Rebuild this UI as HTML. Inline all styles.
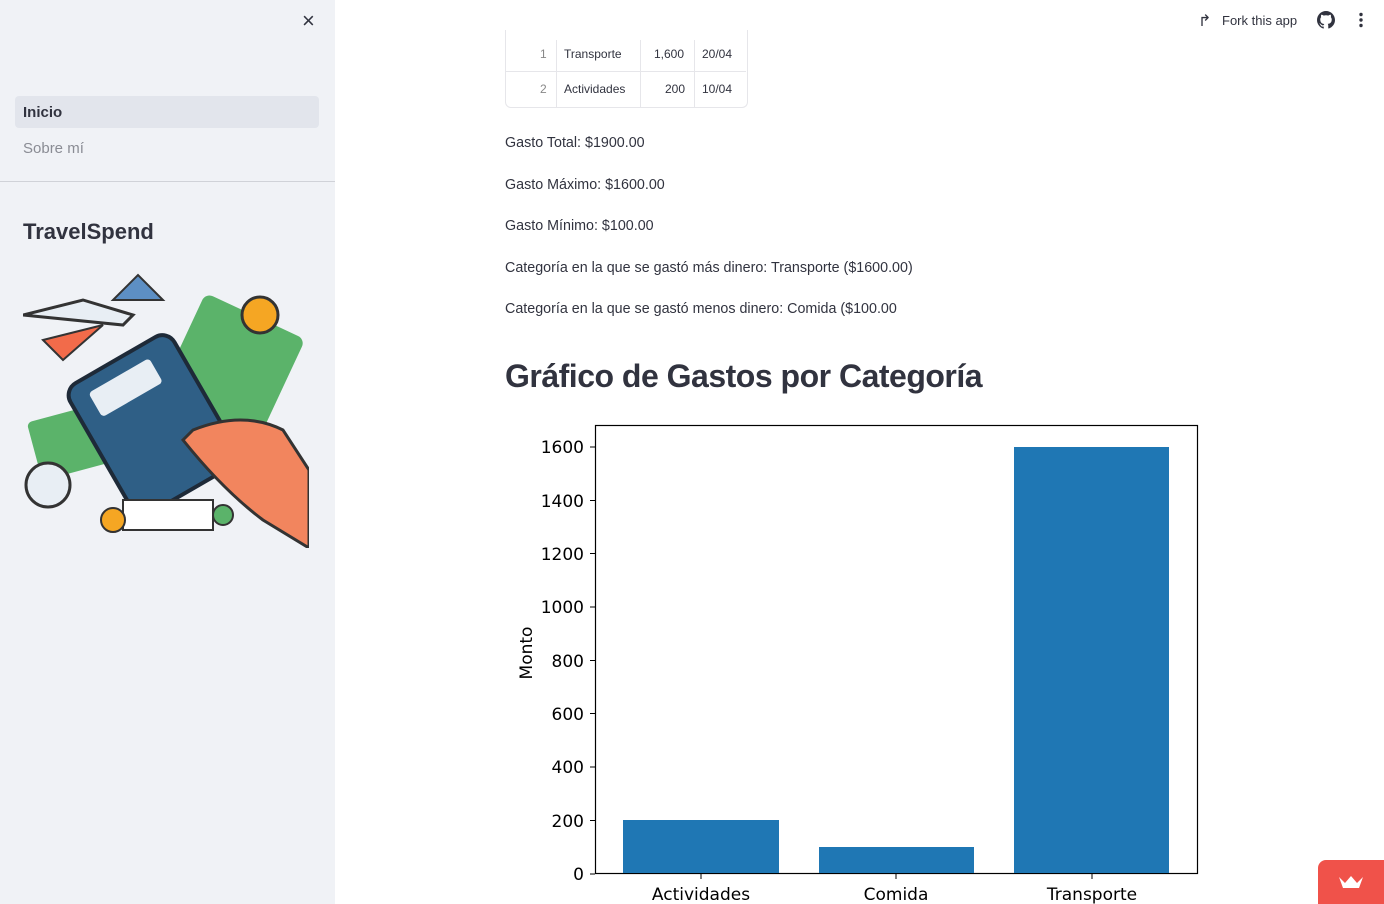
<!DOCTYPE html>
<html><head><meta charset="utf-8"><style>
body{margin:0;width:1384px;height:904px;overflow:hidden;font-family:"Liberation Sans",sans-serif;background:#fff;position:relative;color:#31333f}
.sb{position:absolute;left:0;top:0;width:335px;height:904px;background:#f0f2f6}
.t{position:absolute;white-space:nowrap}
.p{font-size:14.3px;color:#31333f}
.cell{position:absolute;font-size:12px;color:#31333f}
</style></head><body>
<div class="sb">
<div class="t" style="left:302px;top:8px;font-size:22px;color:#31333f">×</div>
<div style="position:absolute;left:15px;top:96px;width:304px;height:32px;background:#e2e5ec;border-radius:4px"></div>
<div class="t" style="left:23px;top:104px;font-size:15px;font-weight:600">Inicio</div>
<div class="t" style="left:23px;top:140px;font-size:15px;color:#8a8c94">Sobre mí</div>
<div style="position:absolute;left:0;top:181px;width:335px;height:1px;background:#d0d2d8"></div>
<div class="t" style="left:23px;top:219px;font-size:22px;font-weight:bold">TravelSpend</div>
<svg style="position:absolute;left:23px;top:270px" width="286" height="278" viewBox="0 0 286 278">
<rect x="150" y="40" width="110" height="130" rx="8" fill="#5bb36a" transform="rotate(25 205 105)"/>
<rect x="10" y="140" width="90" height="60" rx="5" fill="#5bb36a" transform="rotate(-15 55 170)"/>
<circle cx="237" cy="45" r="18" fill="#f5a623" stroke="#333" stroke-width="3"/>
<circle cx="25" cy="215" r="22" fill="#e8eef4" stroke="#333" stroke-width="3"/>
<path d="M0 45 L100 55 L110 45 L60 30 Z" fill="#e8eef4" stroke="#333" stroke-width="3"/>
<path d="M20 70 L80 55 L40 90 Z" fill="#f26b4a" stroke="#333" stroke-width="2"/>
<path d="M90 30 L115 5 L140 30 Z" fill="#5d8fc4" stroke="#333" stroke-width="2"/>
<rect x="70" y="80" width="120" height="150" rx="14" fill="#2f5f86" stroke="#1e2a38" stroke-width="4" transform="rotate(-30 130 155)"/>
<rect x="90" y="95" width="70" height="28" rx="4" fill="#e8eef4" transform="rotate(-30 130 155)"/>
<path d="M170 160 Q220 140 260 160 L286 200 L286 278 L240 250 Q200 220 160 170 Z" fill="#f2855e" stroke="#333" stroke-width="3"/>
<rect x="100" y="230" width="90" height="30" fill="#fff" stroke="#333" stroke-width="2"/>
<circle cx="90" cy="250" r="12" fill="#f5a623" stroke="#333" stroke-width="2"/>
<circle cx="200" cy="245" r="10" fill="#5bb36a" stroke="#333" stroke-width="2"/>
</svg>
</div>
<div class="t" style="left:1198px;top:11px;font-size:16px">↱</div>
<div class="t" style="left:1222px;top:13px;font-size:13px;color:#31333f">Fork this app</div>
<svg style="position:absolute;left:1317px;top:11px" width="18" height="18" viewBox="0 0 16 16"><path fill="#31333f" d="M8 0C3.6 0 0 3.6 0 8c0 3.5 2.3 6.5 5.5 7.6.4.1.5-.2.5-.4v-1.4c-2.2.5-2.7-1-2.7-1-.4-.9-.9-1.2-.9-1.2-.7-.5.1-.5.1-.5.8.1 1.2.8 1.2.8.7 1.2 1.9.9 2.3.7.1-.5.3-.9.5-1.1-1.8-.2-3.6-.9-3.6-4 0-.9.3-1.6.8-2.1-.1-.2-.4-1 .1-2.1 0 0 .7-.2 2.2.8.6-.2 1.3-.3 2-.3s1.4.1 2 .3c1.5-1 2.2-.8 2.2-.8.4 1.1.2 1.9.1 2.1.5.6.8 1.3.8 2.1 0 3.1-1.9 3.7-3.6 3.9.3.3.5.8.5 1.5v2.2c0 .2.1.5.6.4C13.7 14.5 16 11.5 16 8c0-4.4-3.6-8-8-8z"/></svg>
<svg style="position:absolute;left:1358px;top:12px" width="6" height="16"><circle cx="3" cy="2.5" r="1.7" fill="#31333f"/><circle cx="3" cy="8" r="1.7" fill="#31333f"/><circle cx="3" cy="13.5" r="1.7" fill="#31333f"/></svg>
<div style="position:absolute;left:505px;top:30px;width:241px;height:77px;border:1px solid #e6e6ea;border-top:none;border-radius:0 0 6px 6px"></div>
<div style="position:absolute;left:556px;top:40px;width:1px;height:67px;background:#e6e6ea"></div>
<div style="position:absolute;left:640px;top:40px;width:1px;height:67px;background:#e6e6ea"></div>
<div style="position:absolute;left:694px;top:40px;width:1px;height:67px;background:#e6e6ea"></div>
<div style="position:absolute;left:506px;top:71px;width:240px;height:1px;background:#e6e6ea"></div>
<div class="cell" style="left:540px;top:47px;color:#888">1</div>
<div class="cell" style="left:564px;top:47px">Transporte</div>
<div class="cell" style="left:654px;top:47px">1,600</div>
<div class="cell" style="left:702px;top:47px">20/04</div>
<div class="cell" style="left:540px;top:82px;color:#888">2</div>
<div class="cell" style="left:564px;top:82px">Actividades</div>
<div class="cell" style="left:665px;top:82px">200</div>
<div class="cell" style="left:702px;top:82px">10/04</div>
<div class="t p" style="left:505px;top:135px">Gasto Total: $1900.00</div>
<div class="t p" style="left:505px;top:177px">Gasto Máximo: $1600.00</div>
<div class="t p" style="left:505px;top:218px">Gasto Mínimo: $100.00</div>
<div class="t p" style="left:505px;top:260px">Categoría en la que se gastó más dinero: Transporte ($1600.00)</div>
<div class="t p" style="left:505px;top:301px">Categoría en la que se gastó menos dinero: Comida ($100.00</div>
<div class="t" style="left:505px;top:358px;font-size:32px;font-weight:bold;letter-spacing:-0.5px">Gráfico de Gastos por Categoría</div>
<svg style="position:absolute;left:500px;top:415px" width="720" height="489" font-family="DejaVu Sans, sans-serif" font-size="17">
<rect x="95.5" y="10.5" width="602" height="448" fill="none" stroke="#000" stroke-width="1.2"/>
<rect x="123" y="405" width="156" height="53" fill="#1f77b4"/>
<rect x="319" y="432" width="155" height="26" fill="#1f77b4"/>
<rect x="514" y="32" width="155" height="426" fill="#1f77b4"/>
<g stroke="#000">
<line x1="90" y1="459" x2="95" y2="459"/><line x1="90" y1="405.5" x2="95" y2="405.5"/><line x1="90" y1="352" x2="95" y2="352"/><line x1="90" y1="298.5" x2="95" y2="298.5"/><line x1="90" y1="245.5" x2="95" y2="245.5"/><line x1="90" y1="192" x2="95" y2="192"/><line x1="90" y1="138.5" x2="95" y2="138.5"/><line x1="90" y1="85.5" x2="95" y2="85.5"/><line x1="90" y1="32" x2="95" y2="32"/>
<line x1="201" y1="459" x2="201" y2="464"/><line x1="396" y1="459" x2="396" y2="464"/><line x1="592" y1="459" x2="592" y2="464"/>
</g>
<g text-anchor="end">
<text x="84" y="465">0</text><text x="84" y="412">200</text><text x="84" y="358">400</text><text x="84" y="305">600</text><text x="84" y="252">800</text><text x="84" y="198">1000</text><text x="84" y="145">1200</text><text x="84" y="92">1400</text><text x="84" y="38">1600</text>
</g>
<g text-anchor="middle">
<text x="201" y="485">Actividades</text><text x="396" y="485">Comida</text><text x="592" y="485">Transporte</text>
<text transform="translate(32 238) rotate(-90)">Monto</text>
</g>
</svg>
<div style="position:absolute;left:1318px;top:860px;width:66px;height:44px;background:#f0524a;border-radius:8px 0 0 0"></div>
<svg style="position:absolute;left:1338px;top:874px" width="26" height="16"><path d="M1 3 L7 9 L13 2 L19 9 L25 3 L21 14 L5 14 Z" fill="#fff"/></svg>
</body></html>
